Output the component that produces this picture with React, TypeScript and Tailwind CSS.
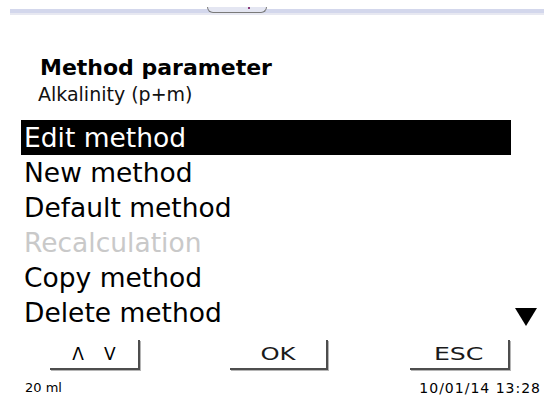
const items = [
  { label: "Edit method", active: true },
  { label: "New method" },
  { label: "Default method" },
  { label: "Recalculation", disabled: true },
  { label: "Copy method" },
  { label: "Delete method", more: true },
];

function SoftKey({ children, className }: { children: React.ReactNode; className: string }) {
  return (
    <div
      className={`h-[30px] border-r-2 border-b-2 border-[#4d4d4d] shadow-[1px_1px_0_#b5b5b5] flex items-center justify-center text-[18px] leading-none text-[#1a1a1a] ${className}`}
    >
      {children}
    </div>
  );
}

export default function App() {
  return (
    <div
      className="w-[544px] h-[401px] bg-white overflow-hidden flex flex-col text-black"
      style={{ fontFamily: '"DejaVu Sans", Verdana, sans-serif' }}
    >
      {/* top frame strip */}
      <div className="relative mt-[9px] ml-[10px] h-[6px] bg-[#d3d7ec] border-b-2 border-[#e7e8f1]">
        <div className="absolute left-[197px] top-[-2px] w-[60px] h-[6px] bg-[#e4e6f2] border-x border-b border-[#7a7a7a] rounded-b-[6px]">
          <div className="absolute left-[40px] top-[0px] w-[2px] h-[2px] bg-[#8a3b7a]" />
        </div>
      </div>

      {/* header */}
      <div className="mt-[42px] ml-[40px] text-[22px] font-bold leading-[22px]">Method parameter</div>
      <div className="mt-[5px] ml-[38px] text-[19px] leading-[20px] text-[#111]">Alkalinity (p+m)</div>

      {/* menu */}
      <div className="mt-[16px] ml-[21px] flex flex-col">
        {items.map((it) => (
          <div key={it.label} className="flex items-start h-[35px]">
            <div
              className={`w-[490px] h-[35px] pl-[3px] text-[26.5px] leading-[35px] whitespace-nowrap ${
                it.active ? "bg-black text-white" : it.disabled ? "text-[#c9c9c9]" : "text-black"
              }`}
            >
              {it.label}
            </div>
            {it.more && (
              <svg width="22" height="18" viewBox="0 0 22 18" className="ml-[4px] mt-[13px]">
                <polygon points="0,0 22,0 11,18" fill="#000" />
              </svg>
            )}
          </div>
        ))}
      </div>

      {/* soft keys */}
      <div className="mt-[10px] flex">
        <SoftKey className="ml-[50px] w-[90px]">
          <span className="flex gap-[20px] text-[17px] text-black">
            <span>Λ</span>
            <span>V</span>
          </span>
        </SoftKey>
        <SoftKey className="ml-[90px] w-[98px]">
          <span className="inline-block scale-x-[1.35]">OK</span>
        </SoftKey>
        <SoftKey className="ml-[82px] w-[100px]">
          <span className="inline-block scale-x-[1.4]">ESC</span>
        </SoftKey>
      </div>

      {/* status line */}
      <div className="mt-[10px] flex justify-between pl-[25px] pr-[3px] text-[14px] leading-[16px]">
        <span className="text-[13px]">20 ml</span>
        <span className="tracking-[1px]">10/01/14 13:28</span>
      </div>
    </div>
  );
}
